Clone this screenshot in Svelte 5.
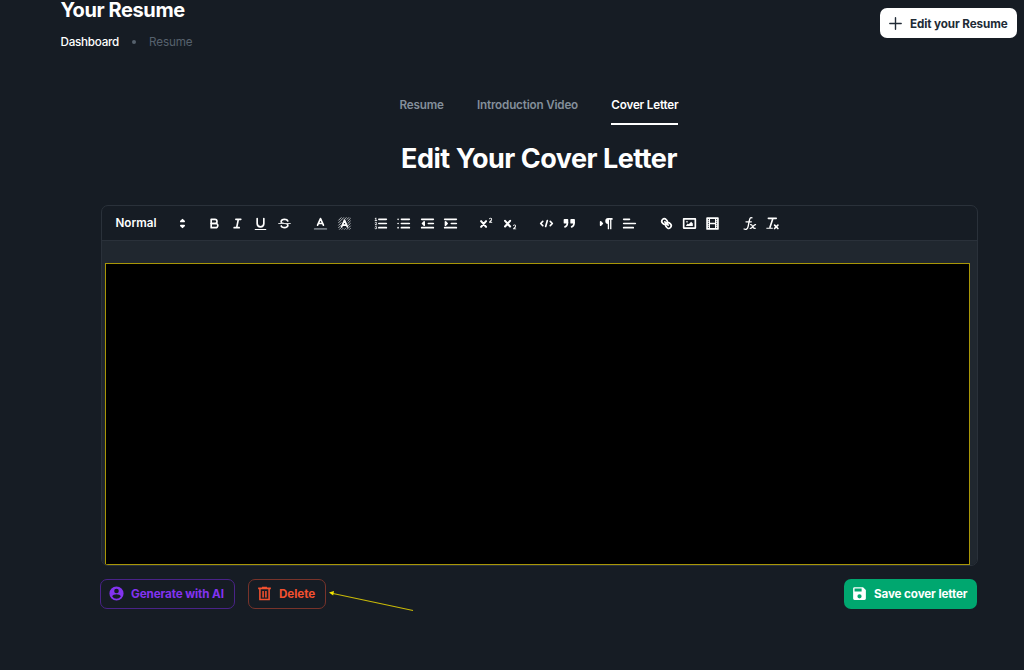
<script lang="ts">
  type Icon = { name: string; body: string }

  const tabs = ['Resume', 'Introduction Video', 'Cover Letter']
  let activeTab = $state('Cover Letter')

  // 18x18 glyphs: .s is stroked, .f is filled, .thin is a lighter stroke
  const groups: Icon[][] = [
    [
      { name: 'Bold', body: '<path class="s" d="M5,4H9.5A2.5,2.5,0,0,1,12,6.5v0A2.5,2.5,0,0,1,9.5,9H5V4Z"/><path class="s" d="M5,9h5.5A2.5,2.5,0,0,1,13,11.5v0A2.5,2.5,0,0,1,10.5,14H5V9Z"/>' },
      { name: 'Italic', body: '<path class="s" d="M7,4H13M5,14H11M8,14L10,4"/>' },
      { name: 'Underline', body: '<path class="s" d="M5,3V9a4.012,4.012,0,0,0,4,4H9a4.012,4.012,0,0,0,4-4V3"/><rect class="f" height="1.2" rx="0.5" width="14" x="2" y="15.5"/>' },
      { name: 'Strike', body: '<path class="s thin" d="M2,9H16"/><path class="f" d="M9.007,8C6.542,7.791,6,7.519,6,6.5,6,5.792,7.283,5,9,5c1.571,0,2.765.679,2.969,1.309a1,1,0,0,0,1.9-.617C13.356,4.106,11.354,3,9,3,6.2,3,4,4.538,4,6.5a3.2,3.2,0,0,0,.5,1.843Z"/><path class="f" d="M8.984,10C11.457,10.208,12,10.479,12,11.5c0,0.708-1.283,1.5-3,1.5-1.571,0-2.765-.679-2.969-1.309a1,1,0,1,0-1.9.617C4.644,13.894,6.646,15,9,15c2.8,0,5-1.538,5-3.5a3.2,3.2,0,0,0-.5-1.843Z"/>' },
    ],
    [
      { name: 'Color', body: '<path class="s dim" d="M2,15.5H16"/><path class="s" d="M5.5,11L9,3L12.5,11M11.63,9H6.38"/>' },
      { name: 'Background', body: '<path class="s hatch" d="M2,5L5,2M2,8L8,2M2,11L5,8M2,14L5,11M3,16L5,14M6,16L7,15M9,16L10,15M9,4L11,2M12,16L16,12M12,4L14,2M13,9L16,6M13,6L16,3M13,12L16,9M15,16L16,15"/><path class="s" d="M5.5,13L9,5L12.5,13M11.63,11H6.38"/>' },
    ],
    [
      { name: 'Ordered list', body: '<path class="s" d="M7,4H16M7,9H16M7,14H16"/><path class="s thin" d="M2.5,5.5H4.5"/><path class="f" d="M3.5,6A0.5,0.5,0,0,1,3,5.5V3.085l-0.276.138A0.5,0.5,0,0,1,2.053,3c-0.124-.247-0.023-0.324.224-0.447l1-.5A0.5,0.5,0,0,1,4,2.5v3A0.5,0.5,0,0,1,3.5,6Z"/><path class="s thin" d="M4.5,10.5h-2c0-.234,1.85-1.076,1.85-2.234A0.959,0.959,0,0,0,2.5,8.156"/><path class="s thin" d="M2.5,14.846a0.959,0.959,0,0,0,1.85-.109A0.7,0.7,0,0,0,3.75,14a0.688,0.688,0,0,0,.6-0.736,0.959,0.959,0,0,0-1.85-.109"/>' },
      { name: 'Bullet list', body: '<path class="s" d="M6.5,4H16M6.5,9H16M6.5,14H16M2.5,4H2.5M2.5,9H2.5M2.5,14H2.5"/>' },
      { name: 'Outdent', body: '<path class="s" d="M2,14H16M2,4H16M10,9H16"/><path class="f s solid" d="M5,7V11L3,9Z"/>' },
      { name: 'Indent', body: '<path class="s" d="M2,14H16M2,4H16M10,9H16"/><path class="f s solid" d="M3,7V11L5,9Z"/>' },
    ],
    [
      { name: 'Superscript', body: '<path class="f" d="M15.5,7H13.86a4.015,4.015,0,0,0,1.915-2.969,1.872,1.872,0,0,0-1.715-1.932A1.922,1.922,0,0,0,12.12,3.311.5.5,0,0,0,13.09,3.56a1,1,0,0,1,1.03-.47c.5.13.64.45.64.94C14.76,4.93,12.5,6.1,12.03,7.32A.5.5,0,0,0,12.5,8h3A.5.5,0,0,0,15.5,7Z"/><path class="s fat" d="M2.5,6.2L8.5,13M8.5,6.2L2.5,13"/>' },
      { name: 'Subscript', body: '<path class="f" d="M15.5,15H13.86a4.015,4.015,0,0,0,1.915-2.969,1.872,1.872,0,0,0-1.715-1.932A1.922,1.922,0,0,0,12.12,11.311.5.5,0,0,0,13.09,11.56a1,1,0,0,1,1.03-.47c.5.13.64.45.64.94C14.76,12.93,12.5,14.1,12.03,15.32A.5.5,0,0,0,12.5,16h3A.5.5,0,0,0,15.5,15Z"/><path class="s fat" d="M2.5,5.8L8.5,12.6M8.5,5.8L2.5,12.6"/>' },
    ],
    [
      { name: 'Code', body: '<path class="s" d="M4.5,6.5L2,9L4.5,11.5M13.5,6.5L16,9L13.5,11.5M10,5.5L8,12.5"/>' },
      { name: 'Quote', body: '<path class="f s solid" d="M3,4.5H6.5V8H3ZM11,4.5H14.5V8H11Z"/><path class="s" d="M6.5,8c0,4.031-3,5-3,5M14.5,8c0,4.031-3,5-3,5"/>' },
    ],
    [
      { name: 'Direction', body: '<path class="f s solid" d="M2,11L4,9L2,7Z"/><path class="s" d="M15.5,3.5H11.5"/><path class="f" d="M11,2.5a3.3,3.3,0,0,0,0,7h1V2.5Z"/><path class="f" d="M10.5,3.5h1.6V16H10.5ZM13.3,3.5h1.6V16H13.3Z"/>' },
      { name: 'Align', body: '<path class="s" d="M2,9H16M2,14H13.5M2,4H9"/>' },
    ],
    [
      { name: 'Link', body: '<path class="s" d="M7,7L11,11"/><path class="s" d="M8.9,4.577a3.476,3.476,0,0,1,.36,4.679A3.476,3.476,0,0,1,4.577,8.9C3.185,7.5,2.035,6.4,4.217,4.217S7.5,3.185,8.9,4.577Z"/><path class="s" d="M13.423,9.1a3.476,3.476,0,0,0-4.679-.36,3.476,3.476,0,0,0,.36,4.679c1.392,1.392,2.5,2.542,4.679.36S14.815,10.5,13.423,9.1Z"/>' },
      { name: 'Image', body: '<rect class="s" height="11" width="14" x="2" y="3.5"/><circle class="f" cx="6" cy="7" r="1"/><path class="f" d="M5,12V11L7,9L8,10L11,7L13,9V12Z"/>' },
      { name: 'Video', body: '<rect class="s" height="13" width="13" x="2.5" y="2.5"/><path class="f" d="M4.5,3h1.5V15H4.5ZM12,3H13.5V15H12ZM5,8H13V10H5ZM3,5H5V6H3ZM3,7H5V8H3ZM3,10H5V11H3ZM3,12H5V13H3ZM13,5H15V6H13ZM13,7H15V8H13ZM13,10H15V11H13ZM13,12H15V13H13Z"/>' },
    ],
    [
      { name: 'Formula', body: '<path class="s mid" d="M12,2.2C9.7,1.4,9.2,3.2,8.7,6L7.3,12.8C6.8,15.6,4.6,16.8,2.5,15.6M4.8,7H11.2"/><path class="s mid" d="M10.4,10.4C12.8,9.4,12.4,16,15.8,14.8M16.2,10.3C13.9,9.9,12.4,15.5,9.9,14.9"/>' },
      { name: 'Clean', body: '<path class="s" d="M4,2.8H13.5M6,13.5L9.35,3.4"/><path class="s" d="M11.5,11L15.5,15M15.5,11L11.5,15"/><rect class="f" height="1.2" rx="0.5" width="8" x="1.5" y="14"/>' },
    ],
  ]
</script>

<div class="page">
  <header class="header">
    <div>
      <h1 class="header__title">Your Resume</h1>
      <nav class="crumbs">
        <span class="crumbs__link">Dashboard</span>
        <span class="crumbs__dot"></span>
        <span class="crumbs__current">Resume</span>
      </nav>
    </div>
    <button class="btn btn--light">
      <svg width="17" height="17" viewBox="0 0 17 17" fill="none" stroke="currentColor" stroke-width="1.4" stroke-linecap="round"><path d="M8.5 2.8v11.4M2.8 8.5h11.4" /></svg>
      <span>Edit your Resume</span>
    </button>
  </header>

  <div class="tabs">
    {#each tabs as tab}
      <button class="tab" class:tab--active={tab === activeTab} onclick={() => (activeTab = tab)}>{tab}</button>
    {/each}
  </div>

  <h2 class="title">Edit Your Cover Letter</h2>

  <section class="editor">
    <div class="toolbar">
      <div class="picker">
        <span>Normal</span>
        <svg width="15" height="15" viewBox="0 0 18 18" fill="currentColor" stroke="currentColor" stroke-width="2" stroke-linejoin="round"><path d="M7 11.5L9 13.5L11 11.5ZM7 6.5L9 4.5L11 6.5Z" /></svg>
      </div>
      {#each groups as group}
        <div class="toolbar__group">
          {#each group as icon (icon.name)}
            <button class="tool" aria-label={icon.name}>
              <svg width="15" height="15" viewBox="0 0 18 18">{@html icon.body}</svg>
            </button>
          {/each}
        </div>
      {/each}
    </div>
    <div class="editor__body">
      <div class="editor__content"></div>
    </div>
  </section>

  <footer class="actions">
    <button class="btn btn--purple">
      <svg width="17" height="17" viewBox="0 0 24 24" fill="currentColor"><path d="M12 2a10 10 0 1 0 0 20 10 10 0 0 0 0-20Zm0 3.2a3.3 3.3 0 1 1 0 6.6 3.3 3.3 0 0 1 0-6.6Zm0 14.1a7.2 7.2 0 0 1-6-3.2c0-2 4-3.1 6-3.1s6 1.1 6 3.1a7.2 7.2 0 0 1-6 3.2Z" /></svg>
      <span>Generate with AI</span>
    </button>
    <button class="btn btn--red">
      <svg width="17" height="17" viewBox="0 0 24 24" fill="none" stroke="currentColor" stroke-width="2.2"><path d="M3 4.8H21M8.5 3.5h7M5.5 5V20.5H18.5V5M10 8.5V17.5M14 8.5V17.5" /></svg>
      <span>Delete</span>
    </button>
    <svg class="arrow" width="86" height="22" viewBox="0 0 86 22"><path d="M4 3.5L84 20.5" stroke="#c9ba08" stroke-width="1.2" /><path d="M0 2.5L5 1L4.2 5.5Z" fill="#f3e500" /></svg>
    <button class="btn btn--green">
      <svg width="17" height="17" viewBox="0 0 24 24" fill="currentColor" fill-rule="evenodd"><path d="M17 3H5a2 2 0 0 0-2 2v14a2 2 0 0 0 2 2h14a2 2 0 0 0 2-2V7ZM12 19a3 3 0 1 1 0-6 3 3 0 0 1 0 6ZM15 9H5V5h10Z" /></svg>
      <span>Save cover letter</span>
    </button>
  </footer>
</div>

<style>
  :global(body) {
    background: #161c24;
  }

  .page {
    box-sizing: border-box;
    width: 1024px;
    height: 670px;
    overflow: hidden;
    color: #fff;
    background: #161c24;
    font-family: Inter, 'Liberation Sans', sans-serif;
  }

  button {
    padding: 0;
    border: 0;
    background: none;
    color: inherit;
    font-family: inherit;
  }

  svg {
    display: block;
    flex: none;
  }

  .header {
    display: flex;
    justify-content: space-between;
    height: 85px;
    padding: 0 7px 0 60.5px;
    box-sizing: border-box;
  }

  .header__title {
    margin: 0;
    font-size: 20px;
    line-height: 20px;
    font-weight: 700;
    letter-spacing: -0.4px;
  }

  .crumbs {
    display: flex;
    align-items: center;
    margin-top: 13px;
    font-size: 11.67px;
    line-height: 18px;
    letter-spacing: -0.12px;
  }

  .crumbs__link {
    width: 71px;
    font-weight: 500;
    letter-spacing: -0.25px;
  }

  .crumbs__dot {
    width: 4px;
    height: 4px;
    margin-right: 13.5px;
    border-radius: 50%;
    background: #56616d;
  }

  .crumbs__current {
    color: #56616d;
  }

  .btn {
    display: flex;
    align-items: center;
    box-sizing: border-box;
    height: 30px;
    padding-left: 7px;
    gap: 6px;
    border-radius: 7px;
    font-size: 11.67px;
    font-weight: 700;
    white-space: nowrap;
  }

  .btn--light {
    width: 137px;
    margin-top: 8px;
    padding-top: 1px;
    color: #212b36;
    background: #fff;
    letter-spacing: -0.1px;
  }

  .tabs {
    display: flex;
    justify-content: center;
    gap: 33.3px;
    padding-left: 54px;
  }

  .tab {
    height: 40px;
    padding-top: 1px;
    border-bottom: 2px solid transparent;
    color: #848f9b;
    font-size: 11.67px;
    font-weight: 600;
    letter-spacing: -0.18px;
  }

  .tab--active {
    border-color: #fff;
    color: #fff;
  }

  .title {
    margin: 15px 0 0;
    padding-left: 54px;
    font-size: 27px;
    line-height: 38px;
    font-weight: 700;
    text-align: center;
    letter-spacing: -0.5px;
  }

  .editor {
    box-sizing: border-box;
    width: 877px;
    height: 361px;
    margin: 27px 0 0 100.5px;
    overflow: hidden;
    border: 1px solid #2a313a;
    border-radius: 7px;
  }

  .toolbar {
    display: flex;
    align-items: center;
    gap: 13.2px;
    height: 34px;
    padding-left: 14px;
    border-bottom: 1px solid #2a313a;
  }

  .picker {
    display: flex;
    align-items: center;
    justify-content: space-between;
    width: 74px;
    font-size: 11.67px;
    font-weight: 600;
  }

  .toolbar__group {
    display: flex;
  }

  .tool {
    display: flex;
    justify-content: center;
    width: 23.3px;
  }

  .tool :global(.s) {
    fill: none;
    stroke: #fff;
    stroke-width: 2;
    stroke-linecap: round;
    stroke-linejoin: round;
  }

  .tool :global(.f),
  .tool :global(.solid) {
    fill: #fff;
  }

  .tool :global(.thin) {
    stroke-width: 1;
  }

  .tool :global(.mid) {
    stroke-width: 1.6;
  }

  .tool :global(.fat) {
    stroke-width: 2.5;
  }

  .tool :global(.dim) {
    stroke: #737a82;
  }

  .tool :global(.hatch) {
    stroke: #d5d8db;
    stroke-width: 1;
  }

  .editor__body {
    display: flex;
    box-sizing: border-box;
    height: 324px;
    padding: 22px 6.5px 0 3.5px;
    background: #20272f;
  }

  .editor__content {
    box-sizing: border-box;
    flex: 1;
    height: 302px;
    border: 1px solid #a89607;
    background: #000;
  }

  .actions {
    display: flex;
    align-items: flex-start;
    margin-top: 12px;
    padding: 0.5px 47px 0 100px;
  }

  .btn--purple {
    width: 135px;
    border: 1px solid #4a2388;
    color: #8333f0;
    letter-spacing: -0.1px;
  }

  .btn--red {
    width: 78px;
    margin-left: 13px;
    border: 1px solid #78332a;
    color: #f1502f;
    letter-spacing: -0.05px;
  }

  .arrow {
    margin: 11px 0 0 3px;
  }

  .btn--green {
    width: 133px;
    margin-left: auto;
    color: #fff;
    background: #00a76f;
    letter-spacing: -0.12px;
  }
</style>
